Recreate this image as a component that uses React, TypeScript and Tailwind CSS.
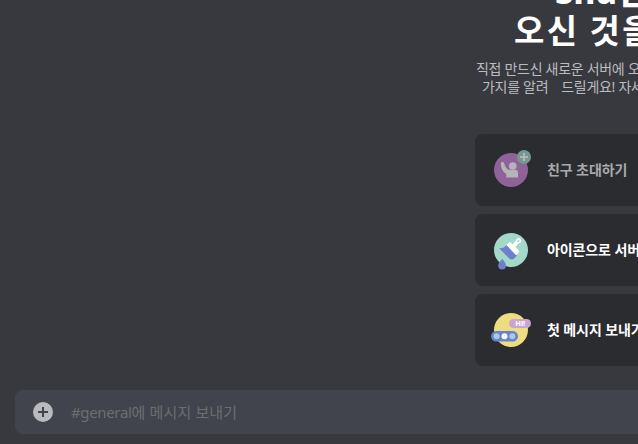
import type { ReactNode } from 'react';

function InviteIcon() {
  return (
    <svg className="size-[42px] shrink-0 opacity-65" viewBox="0 0 42 42">
      <circle cx="21" cy="21" r="17" fill="#c57fd1" />
      <circle cx="34" cy="8" r="7" fill="#9dd2c4" />
      <path d="M34 4v8M30 8h8" stroke="#fff" strokeWidth="2" />
      <circle cx="22.8" cy="17" r="3.8" fill="#fff" />
      <path d="M10.8 14.5c0-1.8 2.8-2.1 3.4 0 .7 2.8 1.8 4.8 4.3 6.2h6.8c2 0 2.7 1.5 2.7 3.2V28.5H16.2v-3.7C12.7 22.8 10.8 18.7 10.8 14.5Z" fill="#fff" />
    </svg>
  );
}

function BrushIcon() {
  return (
    <svg className="size-[42px] shrink-0" viewBox="0 0 42 42">
      <circle cx="21" cy="21" r="17" fill="#a3d9c8" />
      <path d="M8.8 19c2.8 1 5.4-.4 8-3l10.3 10.5-3.2 3.2c-1 1-3.2 1.1-4.4 0Z" fill="#6d80cd" />
      <path d="m16.4 16 2.1-2.1c1-1 2-.6 2.8.2l1.4 1.4 3.3-4.2c.6-2.5 3.5-3.1 4.7-1.3 1.4 2.1.1 4-1.9 4.3l-3.5 3.6 3 3c1 1 1.1 2 .2 3l-2.4 2.3Z" fill="#fff" />
      <circle cx="28.4" cy="12.2" r="1.1" fill="#a3d9c8" />
      <path d="M12.2 29.8c1.8 2.2 3.8 4.5 3.8 6.8a3.9 3.9 0 0 1-7.8 0c0-2.3 2.2-4.6 4-6.8Z" fill="#6d80cd" />
    </svg>
  );
}

function MessageIcon() {
  return (
    <svg className="size-[42px] shrink-0" viewBox="0 0 42 42">
      <circle cx="21" cy="21" r="17" fill="#eddc80" />
      <rect x="19" y="10" width="22" height="9" rx="4.5" fill="#c9a6d1" />
      <text x="30.2" y="17.2" textAnchor="middle" fill="#fff" className="font-['Noto_Sans',sans-serif] text-[7.5px] font-bold">Hi!</text>
      <rect x="1" y="22" width="27" height="10.5" rx="5.25" fill="#6d80cd" />
      <circle cx="6.6" cy="27.2" r="3" fill="#a3cde6" />
      <circle cx="14.5" cy="27.2" r="3" fill="#f3fbff" />
      <circle cx="22.3" cy="27.2" r="3" fill="#a3cde6" />
    </svg>
  );
}

function Card({ icon, children, done = false }: { icon: ReactNode; children: ReactNode; done?: boolean }) {
  return (
    <div className="flex h-[72px] items-center rounded-lg bg-[#2b2c30] pl-[15px]">
      {icon}
      <span className={`mb-0.5 ml-[15px] text-[14px] font-bold tracking-[-0.1px] ${done ? 'text-[#a9aaac]' : 'text-white'}`}>{children}</span>
    </div>
  );
}

export default function App() {
  return (
    <div className="flex h-[444px] w-[638px] flex-col overflow-hidden whitespace-nowrap bg-[#38393e] font-['Noto_Sans','Noto_Sans_CJK_KR',sans-serif]">
      <div className="h-[390px] shrink-0 overflow-hidden pl-[475px]">
        <div className="-mt-[26px] h-[86px] w-[400px] text-[33px] font-bold text-white">
          <div className="pl-20 font-extrabold leading-9">Shu님의 서버에</div>
          <div className="pl-[39px] font-['Noto_Sans_CJK_KR',sans-serif] leading-[38px] tracking-[2.4px]">오신 것을 환영합니다</div>
        </div>
        <div className="h-[74px] w-[400px] text-[14px] leading-[18px] tracking-[-0.3px] text-[#bbbcbf]">
          <div className="pl-px">직접 만드신 새로운 서버에 오신 것을 환영해요.</div>
          <div className="whitespace-pre pl-[7px]">가지를 알려<span className="inline-block w-[13px]" />드릴게요! 자세히 알아보세요.</div>
        </div>
        <div className="flex w-[400px] flex-col gap-2">
          <Card icon={<InviteIcon />} done>친구 초대하기</Card>
          <Card icon={<BrushIcon />}>아이콘으로 서버 꾸미기</Card>
          <Card icon={<MessageIcon />}>첫 메시지 보내기</Card>
        </div>
      </div>
      <div className="ml-[15px] flex h-11 w-[700px] shrink-0 items-center rounded-lg bg-[#41444c] pl-[18px]">
        <svg className="size-5" viewBox="0 0 20 20">
          <circle cx="10" cy="10" r="10" fill="#b9babd" />
          <path d="M10 5v10M5 10h10" stroke="#41444c" strokeWidth="2" />
        </svg>
        <span className="ml-[18px] text-[15px] text-[#6c6e70]"><span className="tracking-[-0.35px]">#general</span><span className="tracking-[0.15px]">에 메시지 보내기</span></span>
      </div>
    </div>
  );
}
